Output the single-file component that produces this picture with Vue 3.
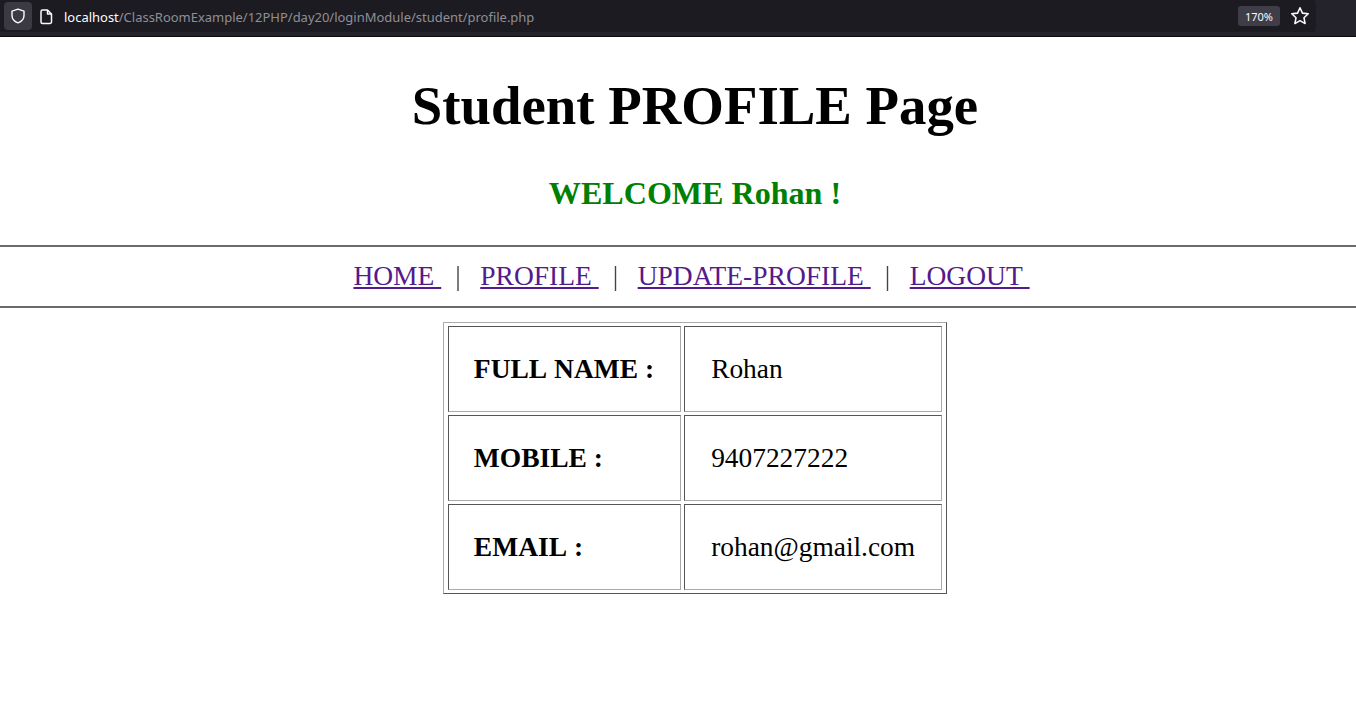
<script setup>
const links = ["HOME", "PROFILE", "UPDATE-PROFILE", "LOGOUT"];
const rows = [
  { label: "FULL NAME :", value: "Rohan" },
  { label: "MOBILE :", value: "9407227222" },
  { label: "EMAIL :", value: "rohan@gmail.com" },
];
</script>

<template>
  <div class="page">
    <header class="toolbar">
      <div class="urlbar">
        <div class="shield">
          <svg width="16" height="16" viewBox="0 0 16 16" fill="none" stroke="#fbfbfe" stroke-width="1.4">
            <path d="M8 1.2 L14 3.2 V7.5 C14 11 11.5 13.6 8 14.9 C4.5 13.6 2 11 2 7.5 V3.2 Z" stroke-linejoin="round" />
          </svg>
        </div>
        <svg class="page-icon" width="14" height="16" viewBox="0 0 14 16" fill="none" stroke="#fbfbfe" stroke-width="1.5">
          <path d="M2 2.5 A1.5 1.5 0 0 1 3.5 1 H8.5 L12.5 5 V13 A1.5 1.5 0 0 1 11 14.5 H3.5 A1.5 1.5 0 0 1 2 13 Z M8.5 1 V5 H12.5" stroke-linejoin="round" />
        </svg>
        <div class="url"><span class="host">localhost</span>/ClassRoomExample/12PHP/day20/loginModule/student/profile.php</div>
        <div class="right">
          <span class="zoom">170%</span>
          <svg width="20" height="20" viewBox="0 0 18 18" fill="none" stroke="#fbfbfe" stroke-width="1.4">
            <path d="M9 1.6 L11.2 6.4 L16.4 7 L12.6 10.6 L13.6 15.8 L9 13.2 L4.4 15.8 L5.4 10.6 L1.6 7 L6.8 6.4 Z" stroke-linejoin="round" />
          </svg>
        </div>
      </div>
    </header>

    <div class="centered">
      <h1>Student PROFILE Page</h1>
      <h3>WELCOME Rohan !</h3>
    </div>

    <hr />
    <nav class="centered">
      <template v-for="(link, i) in links" :key="link">
        <a href="#">{{ link }}&nbsp;</a>
        <span v-if="i < links.length - 1" class="sep">|</span>
      </template>
    </nav>
    <hr />

    <div class="centered">
      <table>
        <tbody>
          <tr v-for="row in rows" :key="row.label">
            <th>{{ row.label }}</th>
            <td>{{ row.value }}</td>
          </tr>
        </tbody>
      </table>
    </div>
  </div>
</template>

<style>
html, body {
  margin: 0;
  background: #fff;
  overflow: hidden;
}
</style>

<style scoped>
.page {
  height: 718px;
  overflow: hidden;
  font-family: "Liberation Serif", "Times New Roman", serif;
  color: #000;
}

.toolbar {
  height: 36px;
  box-sizing: content-box;
  border-bottom: 1px solid #0c0c0d;
  background: #24232c;
  font-family: "Noto Sans", "Open Sans", sans-serif;
}

.urlbar {
  width: 1316px;
  height: 32px;
  padding-left: 4px;
  box-sizing: border-box;
  background: #1c1b22;
  border-radius: 0 4px 4px 0;
  display: flex;
  align-items: center;
}

.shield {
  width: 28px;
  height: 28px;
  border-radius: 4px;
  background: #3a3944;
  display: flex;
  align-items: center;
  justify-content: center;
}

.page-icon {
  margin: 2px 0 0 7px;
}

.url {
  margin: 2px 0 0 11px;
  font-size: 12.98px;
  color: #8f8f96;
  white-space: nowrap;
}

.host {
  color: #fbfbfe;
}

.right {
  margin: 0 6px 0 auto;
  display: flex;
  align-items: center;
  gap: 10px;
}

.zoom {
  background: #3e3d48;
  color: #fbfbfe;
  font-size: 11px;
  line-height: 22px;
  height: 20px;
  padding: 0 7px;
  border-radius: 3px;
}

.centered {
  padding-left: 34px;
  text-align: center;
}

h1 {
  margin: 38px 0 0;
  font-size: 54.8px;
  line-height: 62px;
  font-weight: bold;
}

h3 {
  margin: 38px 0 33px;
  font-size: 32.1px;
  line-height: 37px;
  color: #008000;
  font-weight: bold;
}

hr {
  margin: 0;
  height: 0;
  border: none;
  border-top: 2px solid #6b6b6b;
}

nav.centered {
  height: 59px;
  box-sizing: border-box;
  padding-top: 13px;
  padding-left: 27px;
  font-size: 27.5px;
  line-height: 31px;
  color: #444;
}

nav a {
  color: #551a8b;
  text-decoration: underline;
}

.sep {
  display: inline-block;
  margin: 0 19.5px 0 14px;
  will-change: opacity;
}

table {
  margin: 14px auto 0;
  padding: 0 1px;
  border-collapse: separate;
  border-spacing: 3px;
  border: 1px solid;
  border-color: #aaa #555 #555 #aaa;
  font-size: 27.4px;
  line-height: 31px;
  text-align: left;
}

th, td {
  height: 86px;
  padding: 1px 26px 1px 26px;
  box-sizing: border-box;
  border: 1px solid;
  border-color: #555 #aaa #aaa #555;
  font-weight: normal;
}

th {
  padding: 0 26px 2px 25px;
  font-size: 27.5px;
  font-weight: bold;
  font-kerning: none;
}
</style>
